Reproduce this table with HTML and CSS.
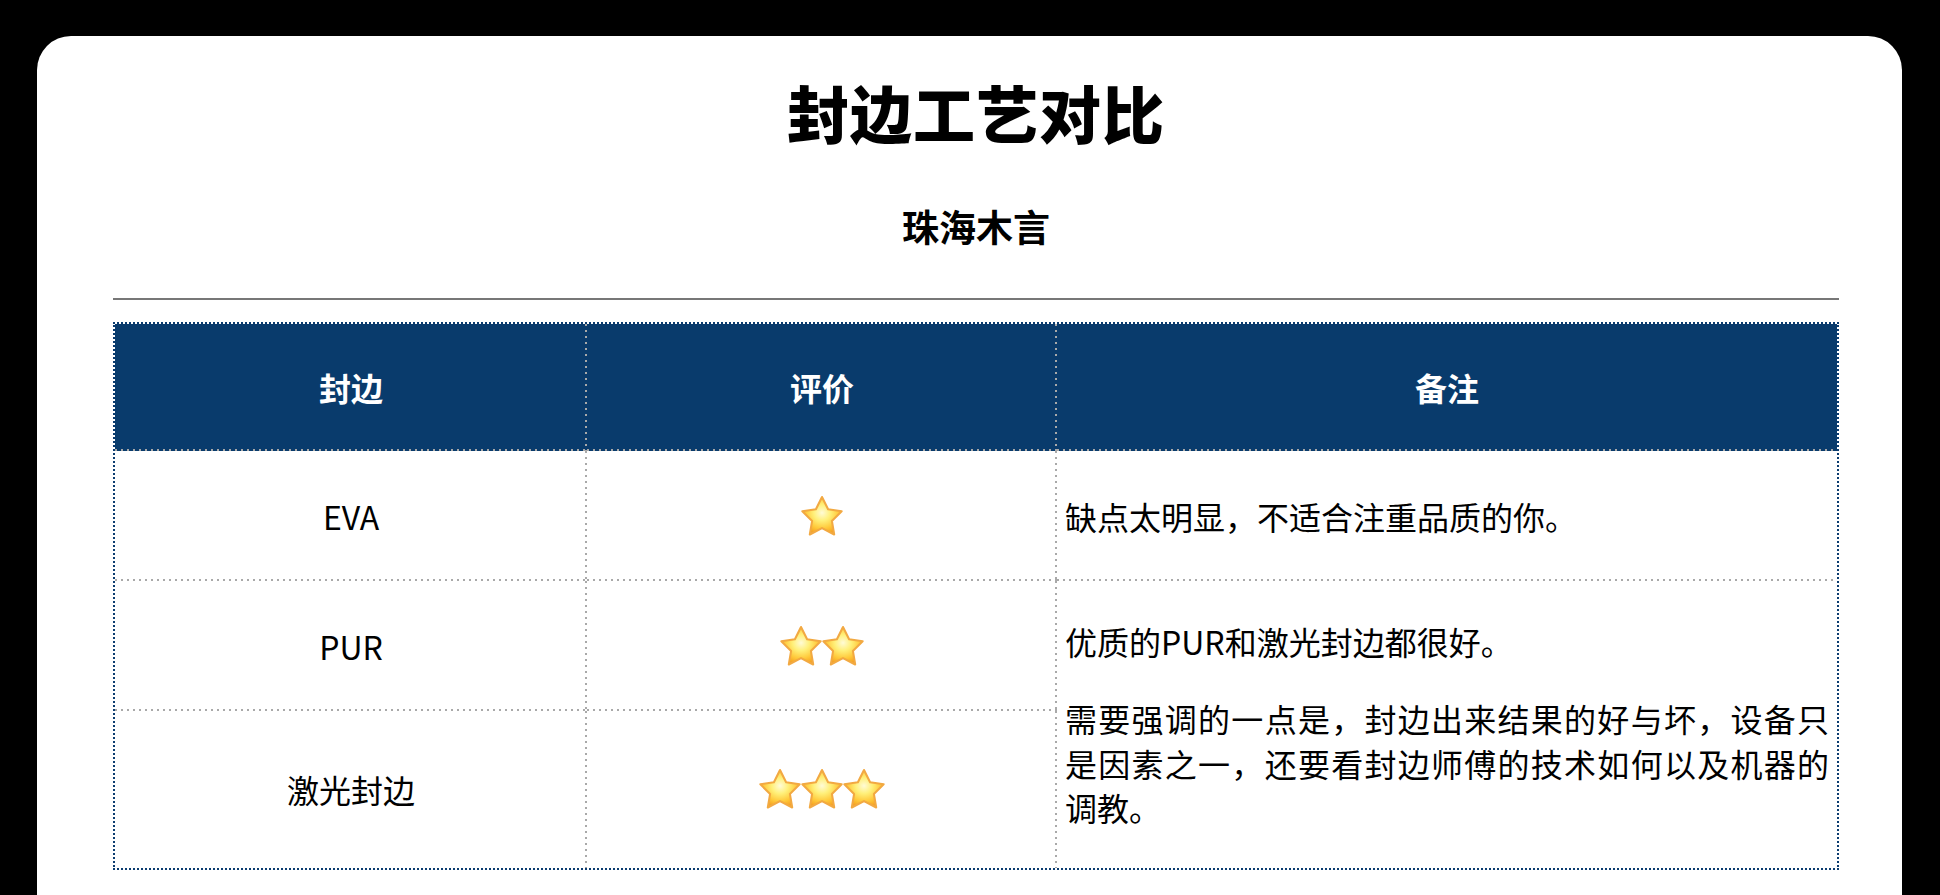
FILE: index.html
```html
<!DOCTYPE html>
<html lang="zh-CN">
<head>
<meta charset="utf-8">
<title>封边工艺对比</title>
<link rel="stylesheet" href="styles.css">
</head>
<body>
<svg width="0" height="0" class="defs" aria-hidden="true">
  <defs>
    <radialGradient id="starFill" cx="0.5" cy="0.42" r="0.6">
      <stop offset="0" stop-color="#fffbd6"/>
      <stop offset="0.35" stop-color="#fff07a"/>
      <stop offset="0.7" stop-color="#ffc93a"/>
      <stop offset="1" stop-color="#f39a1c"/>
    </radialGradient>
    <symbol id="star" viewBox="0 0 40 38">
      <polygon points="20,2.5 25.3,13.2 37.1,14.9 28.6,23.3 30.6,35.1 20,29.5 9.4,35.1 11.4,23.3 2.9,14.9 14.7,13.2" fill="url(#starFill)" stroke="#f2a942" stroke-width="1.8" stroke-linejoin="round"/>
    </symbol>
  </defs>
</svg>
<div class="card">
  <h1 class="title">封边工艺对比</h1>
  <p class="subtitle">珠海木言</p>
  <hr class="rule">
  <table class="cmp">
    <colgroup>
      <col class="c1">
      <col class="c2">
      <col class="c3">
    </colgroup>
    <thead>
      <tr class="r-head">
        <th class="line-r line-b"><p>封边</p></th>
        <th class="line-r line-b"><p>评价</p></th>
        <th class="line-b"><p>备注</p></th>
      </tr>
    </thead>
    <tbody>
      <tr class="r1">
        <td class="line-r line-b"><p>EVA</p></td>
        <td class="line-r line-b"><p class="stars"><svg class="star"><use href="#star"/></svg></p></td>
        <td class="line-b note"><p>缺点太明显，不适合注重品质的你。</p></td>
      </tr>
      <tr class="r2">
        <td class="line-r line-b"><p>PUR</p></td>
        <td class="line-r line-b"><p class="stars"><svg class="star"><use href="#star"/></svg><svg class="star"><use href="#star"/></svg></p></td>
        <td class="note" rowspan="2"><p>优质的PUR和激光封边都很好。</p><p>需要强调的一点是，封边出来结果的好与坏，设备只是因素之一，还要看封边师傅的技术如何以及机器的调教。</p></td>
      </tr>
      <tr class="r3">
        <td class="line-r"><p>激光封边</p></td>
        <td class="line-r"><p class="stars"><svg class="star"><use href="#star"/></svg><svg class="star"><use href="#star"/></svg><svg class="star"><use href="#star"/></svg></p></td>
      </tr>
    </tbody>
  </table>
</div>
</body>
</html>
```
FILE: styles.css
```css
html, body {
  margin: 0;
  padding: 0;
  background: #000;
}
body {
  font-family: "Noto Sans CJK SC", "Noto Sans", sans-serif;
  color: #000;
}
.defs {
  position: absolute;
  width: 0;
  height: 0;
  overflow: hidden;
}
.card {
  margin: 36px 38px 0 37px;
  background: #fff;
  border-radius: 34px;
  padding: 36px 63px 60px 76px;
}
.title {
  margin: 0;
  font-size: 62px;
  line-height: 80px;
  font-weight: 900;
  letter-spacing: 1px;
  text-align: center;
}
.subtitle {
  margin: 49px 0 0;
  font-size: 37px;
  line-height: 50px;
  font-weight: 700;
  text-align: center;
}
.rule {
  margin: 47px 0 0;
  height: 0;
  border: 0;
  border-top: 2px solid #777;
}
.cmp {
  margin-top: 22px;
  width: 100%;
  border-collapse: separate;
  border-spacing: 0;
  border: 2px dotted #0b3c70;
  table-layout: fixed;
}
.c1 { width: 472px; }
.c2 { width: 470px; }
.cmp th,
.cmp td {
  font-size: 32px;
  line-height: 44.8px;
  text-align: center;
  vertical-align: middle;
  padding: 0 8px;
  background-repeat: no-repeat;
}
.cmp th {
  color: #fff;
  font-weight: 700;
  background-color: #093b6c;
}
.cmp p {
  margin: 32px 0;
}
.cmp td.note {
  text-align: justify;
  padding: 0 8px;
}
.r-head { height: 127px; }
.r1 { height: 130px; }
.r2 { height: 130px; }
.r3 { height: 157px; }

.line-r {
  background-image: repeating-linear-gradient(to bottom, #a9a9a9 0 2px, transparent 2px 6px);
  background-size: 2px 100%;
  background-position: right top;
}
.line-b {
  background-image: repeating-linear-gradient(to right, #a9a9a9 0 2px, transparent 2px 6px);
  background-size: 100% 2px;
  background-position: left bottom;
}
.line-r.line-b {
  background-image:
    repeating-linear-gradient(to bottom, #a9a9a9 0 2px, transparent 2px 6px),
    repeating-linear-gradient(to right, #a9a9a9 0 2px, transparent 2px 6px);
  background-size: 2px 100%, 100% 2px;
  background-position: right top, left bottom;
}
.stars {
  display: flex;
  justify-content: center;
  align-items: center;
  gap: 0;
  height: 44.8px;
}
.star {
  width: 46px;
  height: 44px;
  margin: 0 -2px;
  display: block;
}
```
